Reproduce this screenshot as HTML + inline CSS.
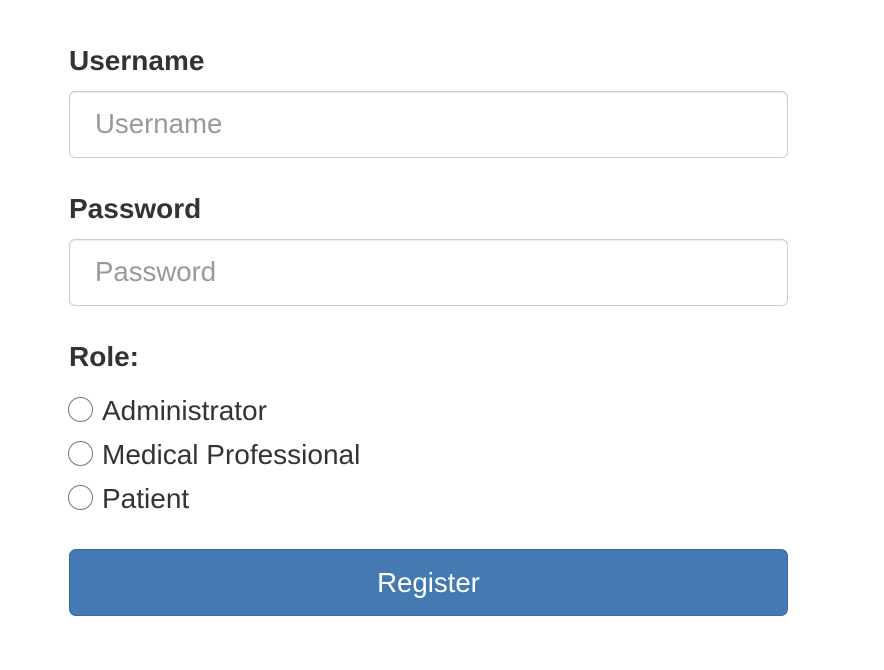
<!DOCTYPE html>
<html><head><style>
body{margin:0;width:884px;height:670px;background:#fff;font-family:"Liberation Sans",Helvetica,Arial,sans-serif;color:#333;position:relative;overflow:hidden}
.l{position:absolute;left:69px;font-weight:bold;font-size:28px;line-height:30px}
.i{position:absolute;left:69px;border:1.5px solid #ccc;border-radius:6px;box-shadow:inset 0 1px 1px rgba(0,0,0,.075);box-sizing:border-box;width:719px;height:67px}
.i span{position:absolute;left:25px;top:0;line-height:64px;font-size:27.6px;color:#999}
.r{position:absolute;left:69px;font-size:28px;line-height:30px}
.r i{position:absolute;left:-1px;top:1px;width:23px;height:23px;border:1.6px solid #767676;border-radius:50%}
.r span{position:absolute;left:33px;top:0;white-space:nowrap}
.b{position:absolute;left:69px;top:549px;width:719px;height:67px;box-sizing:border-box;background:#4579b2;border:1px solid #3a6aa0;border-radius:7px;color:#fff;font-size:27.6px;text-align:center;line-height:65px}
</style></head><body>
<div class="l" style="top:46px">Username</div>
<div class="i" style="top:91px"><span>Username</span></div>
<div class="l" style="top:194px">Password</div>
<div class="i" style="top:239px"><span>Password</span></div>
<div class="l" style="top:342px">Role:</div>
<div class="r" style="top:396px"><i></i><span>Administrator</span></div>
<div class="r" style="top:440px"><i></i><span>Medical Professional</span></div>
<div class="r" style="top:484px"><i></i><span>Patient</span></div>
<div class="b">Register</div>
</body></html>
